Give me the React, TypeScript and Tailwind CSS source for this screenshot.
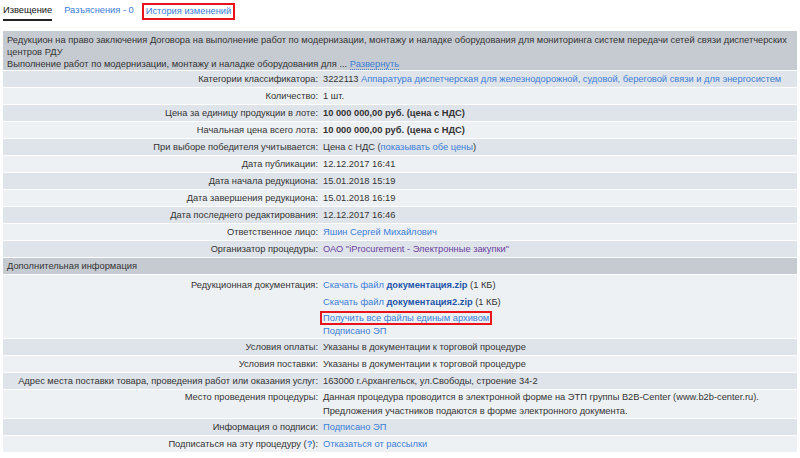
import React from 'react';

type Row = {
  label: React.ReactNode;
  value: React.ReactNode;
};

const link = 'text-[#3b7dd8]';

function Field({ row, dark, cls = 'py-[2px]' }: { row: Row; dark: boolean; cls?: string }) {
  return (
    <div className={`grid grid-cols-[318px_1fr] ${dark ? 'bg-[#dfe4ea]' : 'bg-[#eef1f4]'}`}>
      <div className={`pr-[3px] text-right ${cls}`}>{row.label}</div>
      <div className={`pl-[2px] ${cls}`}>{row.value}</div>
    </div>
  );
}

export default function App() {
  const top: Row[] = [
    {
      label: 'Категории классификатора:',
      value: (
        <>
          3222113 <span className={link}>Аппаратура диспетчерская для железнодорожной, судовой, береговой связи и для энергосистем</span>
        </>
      ),
    },
    { label: 'Количество:', value: '1 шт.' },
    { label: 'Цена за единицу продукции в лоте:', value: <b>10 000 000,00 руб. (цена с НДС)</b> },
    { label: 'Начальная цена всего лота:', value: <b>10 000 000,00 руб. (цена с НДС)</b> },
    {
      label: 'При выборе победителя учитывается:',
      value: (
        <>
          Цена с НДС (<span className={link}>показывать обе цены</span>)
        </>
      ),
    },
    { label: 'Дата публикации:', value: '12.12.2017 16:41' },
    { label: 'Дата начала редукциона:', value: '15.01.2018 15:19' },
    { label: 'Дата завершения редукциона:', value: '15.01.2018 16:19' },
    { label: 'Дата последнего редактирования:', value: '12.12.2017 16:46' },
    { label: 'Ответственное лицо:', value: <span className={link}>Яшин Сергей Михайлович</span> },
    {
      label: 'Организатор процедуры:',
      value: <span className="text-[#6b3fa0]">ОАО "iProcurement - Электронные закупки"</span>,
    },
  ];

  const docs: Row = {
    label: 'Редукционная документация:',
    value: (
      <div className="flex flex-col items-start">
        <div className="h-[17px]">
          <span className={link}>Скачать файл <b className="text-[#1f55a8]">документация.zip</b></span> (1 КБ)
        </div>
        <div className="h-[15px]">
          <span className={link}>Скачать файл <b className="text-[#1f55a8]">документация2.zip</b></span> (1 КБ)
        </div>
        <div className="border-2 border-[#e8141c] px-[1px] -ml-[3px] leading-[10px]">
          <span className={link}>Получить все файлы единым архивом</span>
        </div>
        <div className={`${link} h-[12px]`}>Подписано ЭП</div>
      </div>
    ),
  };

  const rest: Row[] = [
    { label: 'Условия оплаты:', value: 'Указаны в документации к торговой процедуре' },
    { label: 'Условия поставки:', value: 'Указаны в документации к торговой процедуре' },
    {
      label: 'Адрес места поставки товара, проведения работ или оказания услуг:',
      value: '163000 г.Архангельск, ул.Свободы, строение 34-2',
    },
  ];

  const place: Row = {
    label: 'Место проведения процедуры:',
    value: (
      <>
        Данная процедура проводится в электронной форме на ЭТП группы B2B-Center (www.b2b-center.ru).
        <br />
        Предложения участников подаются в форме электронного документа.
      </>
    ),
  };

  const tail: Row[] = [
    { label: 'Информация о подписи:', value: <span className={link}>Подписано ЭП</span> },
    {
      label: (
        <>
          Подписаться на эту процедуру (<b className={link}>?</b>):
        </>
      ),
      value: <span className={link}>Отказаться от рассылки</span>,
    },
  ];

  return (
    <div className="w-[800px] h-[458px] bg-white text-[#333] text-[9.3px] leading-[12px] font-['Liberation_Sans',Arial,sans-serif] overflow-hidden">
      {/* tabs */}
      <div className="flex items-start gap-[12px] px-[3px] pt-[4px] h-[31px] text-[9.3px] leading-[13px]">
        <div className="border-b-2 border-[#222] pb-[2px] text-[#111]">Извещение</div>
        <div className="text-[#3b7dd8]">Разъяснения - 0</div>
        <div className="-mt-[1px] -ml-[4px] border-2 border-[#e8141c] px-[2px] text-[#3b7dd8]">История изменений</div>
      </div>

      <div className="mx-[3px] flex flex-col">
        <div className="bg-[#c6cbd2] px-[4px] pt-[3px]">
          Редукцион на право заключения Договора на выполнение работ по модернизации, монтажу и наладке оборудования для мониторинга систем передачи сетей связи диспетчерских центров РДУ
          <br />
          Выполнение работ по модернизации, монтажу и наладке оборудования для ...{' '}
          <span className={`${link} border-b border-dotted border-[#3b7dd8]`}>Развернуть</span>
        </div>
        <div className="flex flex-col gap-px bg-white pt-px">
          {top.map((r, i) => (
            <Field key={i} row={r} dark={i % 2 === 0} />
          ))}
          <div className="bg-[#c6cbd2] px-[4px] py-[2px]">Дополнительная информация</div>
          <Field row={docs} dark={false} cls="pt-[4px] pb-[1px]" />
          {rest.map((r, i) => (
            <Field key={i} row={r} dark={i % 2 === 0} />
          ))}
          <Field row={place} dark={false} cls="py-0 leading-[14px]" />
          {tail.map((r, i) => (
            <Field key={i} row={r} dark={i % 2 === 0} />
          ))}
        </div>
      </div>
    </div>
  );
}
